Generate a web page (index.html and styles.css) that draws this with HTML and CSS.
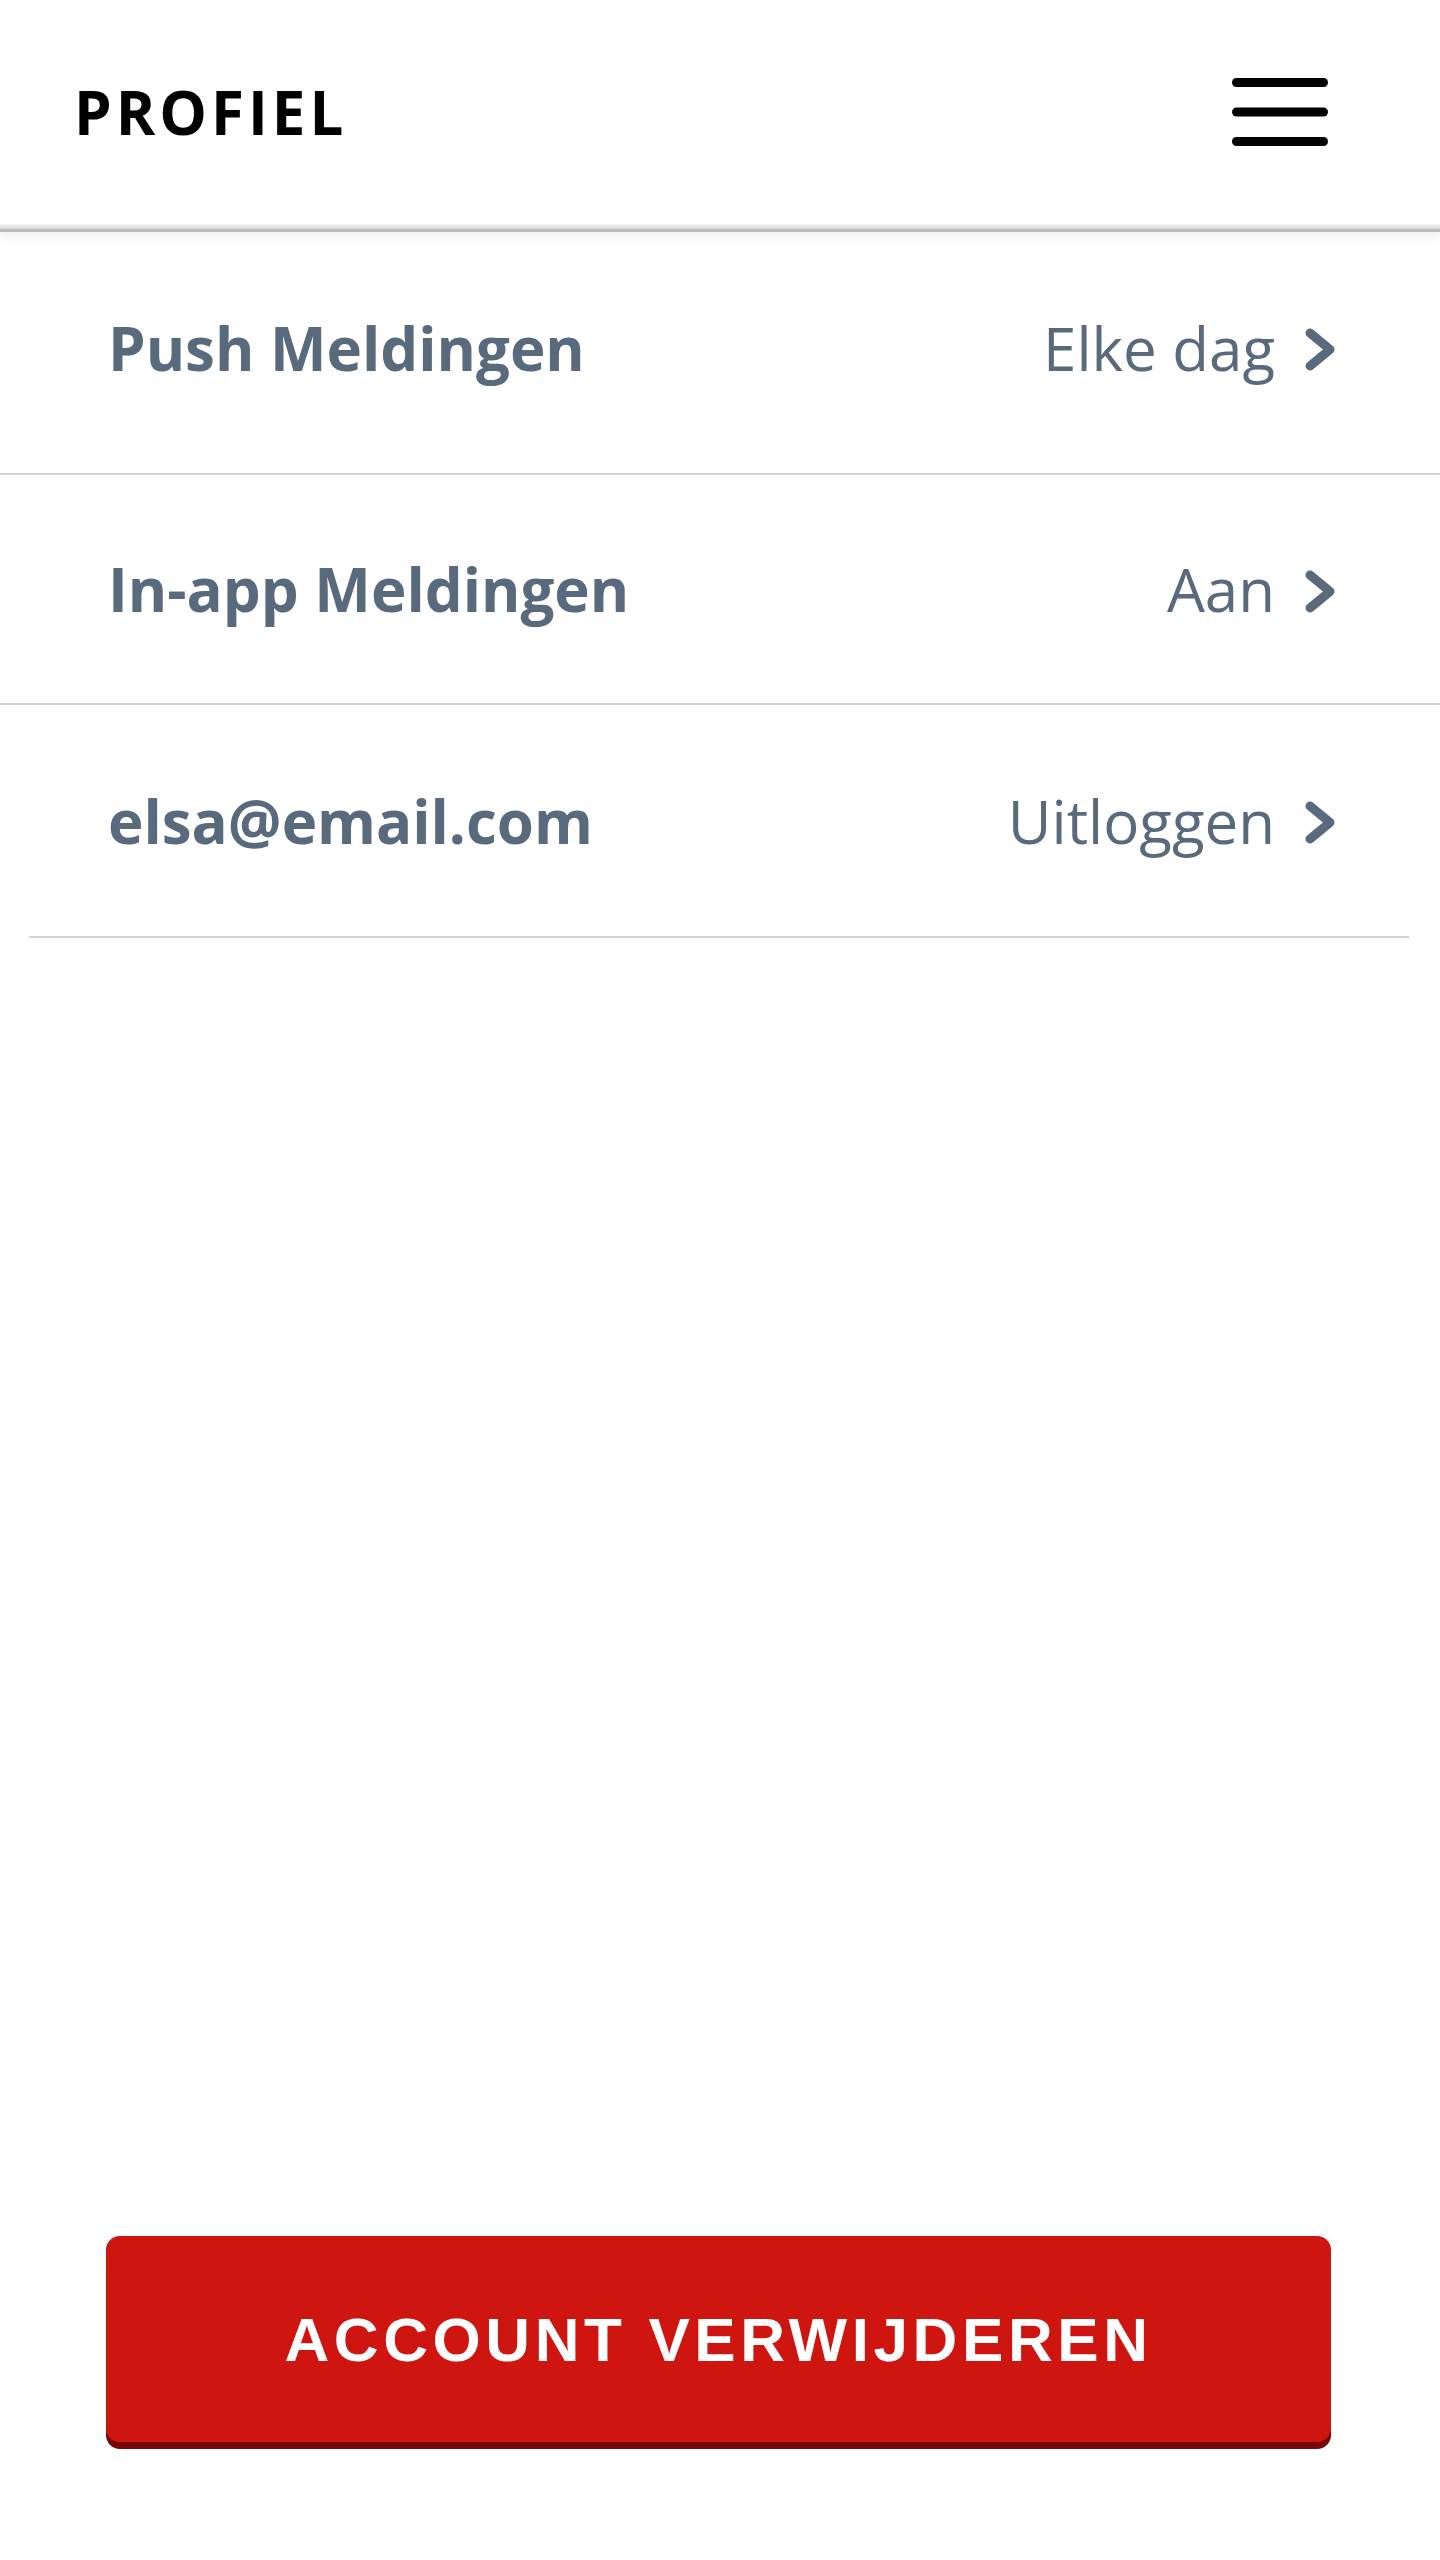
FILE: index.html
```html
<!DOCTYPE html>
<html lang="nl">
<head>
<meta charset="utf-8">
<title>Profiel</title>
<link rel="stylesheet" href="styles.css">
</head>
<body>
<div class="page">
  <header class="topbar">
    <h1 class="title">PROFIEL</h1>
    <button class="menu" aria-label="Menu">
      <svg width="96" height="68" viewBox="0 0 96 68">
        <g stroke="#000" stroke-width="9" stroke-linecap="round">
          <line x1="4.5" y1="4.5" x2="91.5" y2="4.5"/>
          <line x1="4.5" y1="34" x2="91.5" y2="34"/>
          <line x1="4.5" y1="63.5" x2="91.5" y2="63.5"/>
        </g>
      </svg>
    </button>
  </header>

  <ul class="list">
    <li class="row row-first">
      <span class="label">Push Meldingen</span>
      <span class="value">Elke dag
        <svg class="chev" width="30" height="43" viewBox="0 0 30 43"><polyline points="5,5 25,21.5 5,38" fill="none" stroke="#596a7d" stroke-width="9" stroke-linecap="round" stroke-linejoin="round"/></svg>
      </span>
    </li>
    <li class="row">
      <span class="label">In-app Meldingen</span>
      <span class="value">Aan
        <svg class="chev" width="30" height="43" viewBox="0 0 30 43"><polyline points="5,5 25,21.5 5,38" fill="none" stroke="#596a7d" stroke-width="9" stroke-linecap="round" stroke-linejoin="round"/></svg>
      </span>
    </li>
    <li class="row row-last">
      <span class="label">elsa@email.com</span>
      <span class="value">Uitloggen
        <svg class="chev" width="30" height="43" viewBox="0 0 30 43"><polyline points="5,5 25,21.5 5,38" fill="none" stroke="#596a7d" stroke-width="9" stroke-linecap="round" stroke-linejoin="round"/></svg>
      </span>
    </li>
  </ul>
  <div class="divider"></div>

  <div class="spacer"></div>

  <button class="danger">ACCOUNT VERWIJDEREN</button>
</div>
</body>
</html>
```

FILE: styles.css
```css
* { box-sizing: border-box; }
html, body { margin: 0; padding: 0; background: #fff; }
body { font-family: "Open Sans", "Liberation Sans", sans-serif; }

.page {
  min-height: 2560px;
  display: flex;
  flex-direction: column;
}

.topbar {
  position: relative;
  z-index: 2;
  height: 232px;
  display: flex;
  align-items: center;
  justify-content: space-between;
  padding: 0 112px 0 74px;
  padding-bottom: 6px;
  background: linear-gradient(to bottom, #fff 0, #fff 224px, #ededed 225px, #dadada 229px);
  border-bottom: 3px solid #bdbdbd;
  box-shadow: 0 4px 12px rgba(0, 0, 0, 0.07);
}

.title {
  margin: 0;
  font-family: "Open Sans", sans-serif;
  font-weight: 700;
  font-size: 60px;
  letter-spacing: 4px;
  color: #000;
  line-height: 1;
}

.menu {
  border: 0;
  background: none;
  padding: 0;
  display: flex;
}

.list {
  list-style: none;
  margin: 0;
  padding: 0;
}

.row {
  display: flex;
  align-items: center;
  justify-content: space-between;
  height: 230px;
  padding: 0 105px 0 108px;
  border-bottom: 2px solid #d2d2d2;
  color: #596a7d;
  font-size: 60px;
  line-height: 1;
}

.row-first {
  height: 243px;
  padding-bottom: 10px;
}

.row-last {
  height: 231px;
  border-bottom: 0;
}

.label {
  font-weight: 700;
  font-size: 60px;
}

.value {
  display: flex;
  align-items: center;
  gap: 30px;
  font-weight: 400;
}

.chev { display: block; margin-top: 4px; }

.divider {
  height: 2px;
  margin: 0 31px 0 29px;
  background: #d2d2d2;
}

.spacer { flex: 1; }

.danger {
  align-self: flex-start;
  margin: 0 0 118px 106px;
  width: 1225px;
  height: 206px;
  border: 0;
  border-radius: 14px;
  background: #cf1510;
  box-shadow: 0 7px 0 #7a0505;
  color: #fff;
  font-family: "Liberation Sans", Arial, sans-serif;
  font-weight: 700;
  font-size: 62px;
  letter-spacing: 4.6px;
  padding: 0;
}
```
